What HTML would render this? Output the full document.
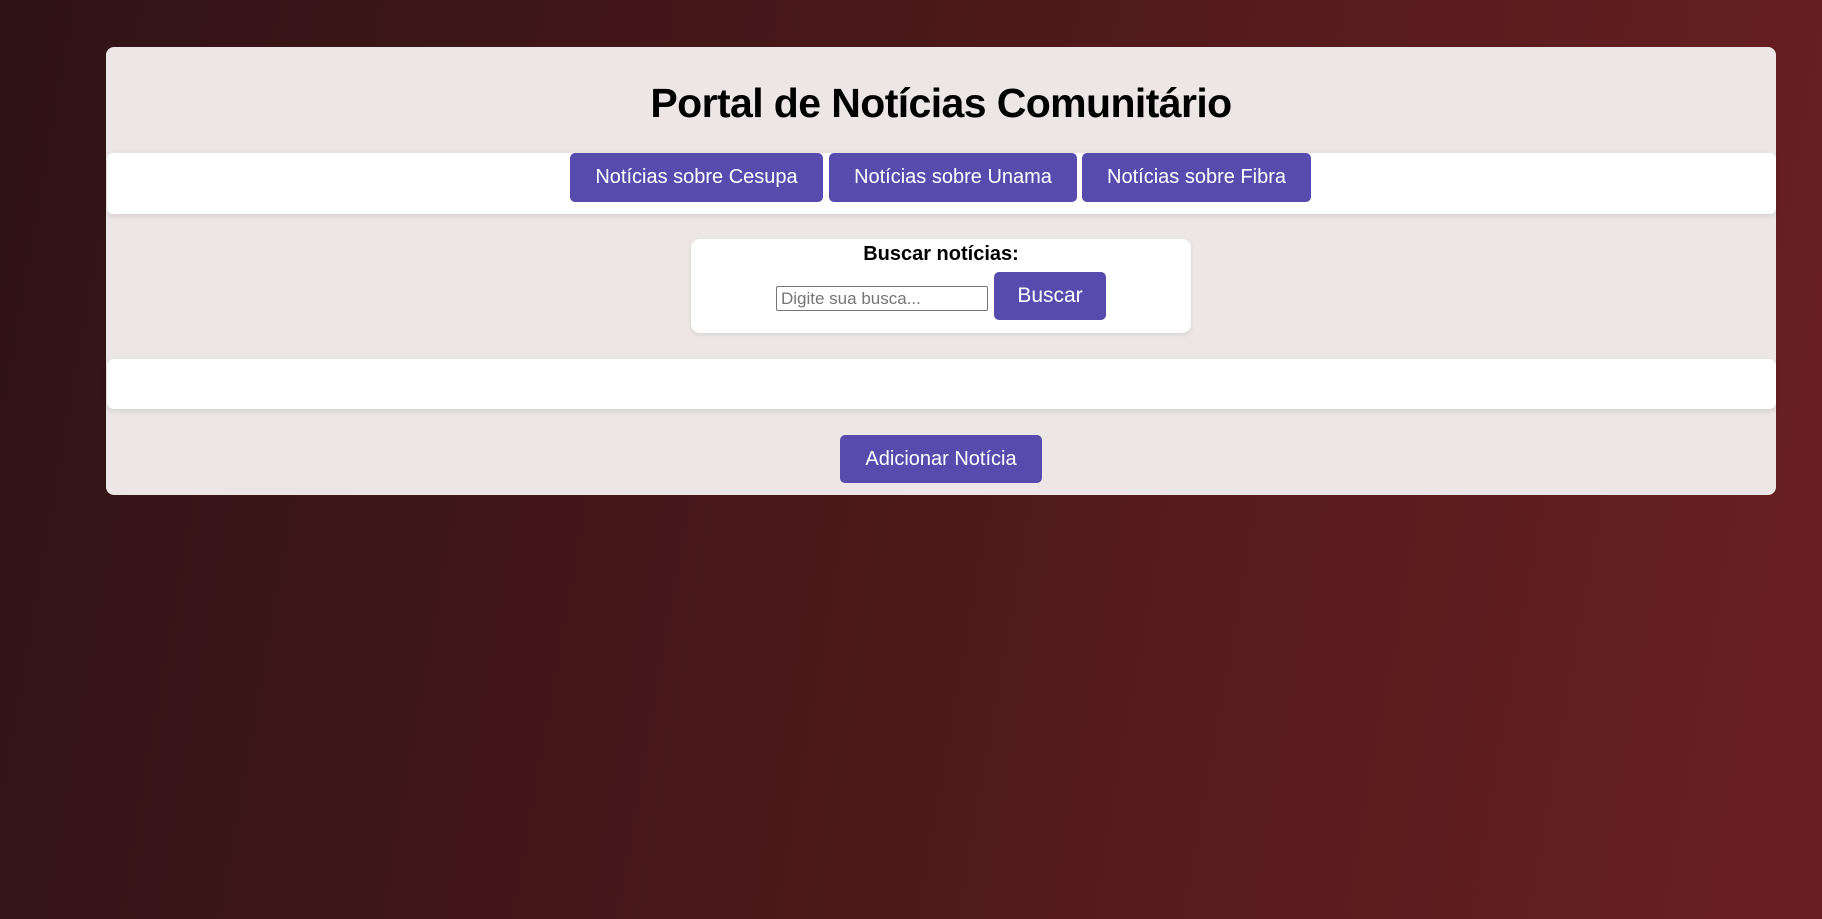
<!DOCTYPE html>
<html><head><meta charset="utf-8"><style>
html,body{margin:0;padding:0;width:1822px;height:919px;overflow:hidden}
body{background:linear-gradient(100deg,#2f1316 0%,#4a181a 45%,#6a2023 100%);font-family:"Liberation Sans",sans-serif;position:relative}
.card{position:absolute;left:106px;top:47px;width:1670px;height:448px;background:#ece7e6;border-radius:8px}
h1{position:absolute;left:106px;width:1670px;top:80px;margin:0;text-align:center;font-size:41px;font-weight:bold;color:#000;letter-spacing:-0.6px}
.nav{position:absolute;left:107px;top:153px;width:1669px;height:61px;background:#fff;border-radius:6px;box-shadow:0 2px 6px rgba(0,0,0,0.1)}
.btn{position:absolute;background:#574cae;color:#fff;border-radius:5px;font-size:20px;display:flex;align-items:center;justify-content:center}
.search{position:absolute;left:691px;top:239px;width:500px;height:94px;background:#fff;border-radius:9px;box-shadow:0 2px 6px rgba(0,0,0,0.08)}
.lbl{position:absolute;left:691px;width:500px;top:243px;text-align:center;font-weight:bold;font-size:20px}
.inp{position:absolute;left:776px;top:286px;border:1px solid #767676;border-radius:2px;background:#fff;font-size:17px;color:#757575;line-height:23px;padding-left:4px;box-sizing:border-box;width:212px;height:25px}
.res{position:absolute;left:107px;top:359px;width:1669px;height:50px;background:#fff;border-radius:7px;box-shadow:0 2px 6px rgba(0,0,0,0.1)}
</style></head><body>
<div class="card"></div>
<h1>Portal de Notícias Comunitário</h1>
<div class="nav"></div>
<div class="btn" style="left:570px;top:153px;width:253px;height:49px">Notícias sobre Cesupa</div>
<div class="btn" style="left:829px;top:153px;width:248px;height:49px">Notícias sobre Unama</div>
<div class="btn" style="left:1082px;top:153px;width:229px;height:49px">Notícias sobre Fibra</div>
<div class="search"></div>
<div class="lbl">Buscar notícias:</div>
<div class="inp">Digite sua busca...</div>
<div class="btn" style="left:994px;top:272px;width:112px;height:48px;font-size:21px">Buscar</div>
<div class="res"></div>
<div class="btn" style="left:840px;top:435px;width:202px;height:48px">Adicionar Notícia</div>
</body></html>
